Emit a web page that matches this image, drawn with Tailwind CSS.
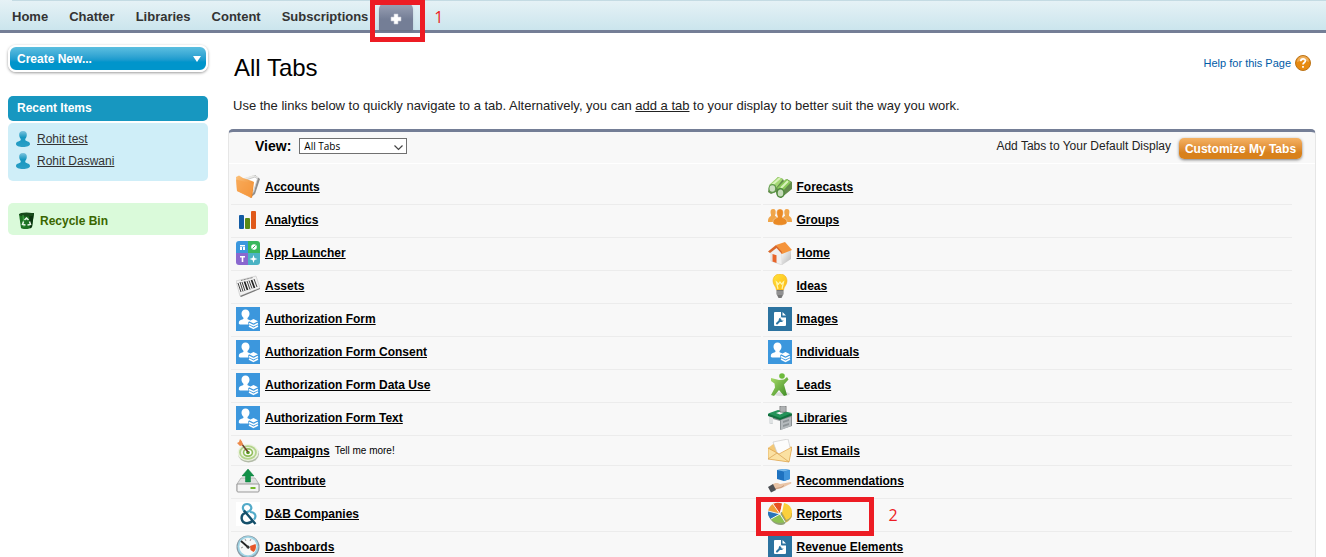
<!DOCTYPE html>
<html lang="en">
<head>
<meta charset="utf-8">
<meta name="viewport" content="width=device-width, initial-scale=1">
<title>All Tabs</title>
<script src="https://cdn.jsdelivr.net/npm/@tailwindcss/browser@4"></script>
</head>
<body class="h-screen overflow-hidden bg-white font-['Liberation_Sans',Arial,sans-serif] text-xs text-[#222]">

<svg class="absolute size-0" aria-hidden="true">
  <defs>
    <linearGradient id="gOrange" x1="0" y1="0" x2="1" y2="1"><stop offset="0" stop-color="#fcc27c"/><stop offset="1" stop-color="#ec7f1c"/></linearGradient>
    <linearGradient id="gGreen" x1="0" y1="0" x2="1" y2="1"><stop offset="0" stop-color="#a9dc6a"/><stop offset="1" stop-color="#3c8a24"/></linearGradient>
    <linearGradient id="gBulb" x1="0" y1="0" x2="1" y2="1"><stop offset="0" stop-color="#ffe23a"/><stop offset="1" stop-color="#fdb913"/></linearGradient>
    <linearGradient id="gGrey" x1="0" y1="0" x2="1" y2="1"><stop offset="0" stop-color="#fafafa"/><stop offset="1" stop-color="#b4b4b4"/></linearGradient>
    <linearGradient id="gPerson" x1="0" y1="0" x2="0" y2="1"><stop offset="0" stop-color="#7cc3dd"/><stop offset=".4" stop-color="#1797c0"/><stop offset="1" stop-color="#2a9fc6"/></linearGradient>
    <clipPath id="launcherClip"><rect width="24" height="24" rx="3"/></clipPath>
  </defs>
  <symbol id="folder" viewBox="0 0 24 24">
    <path d="M10 3l9-3 5 4-5 15-5 4z" fill="#8f8f8f"/><path d="M8 3l10-3 4 2-4 15-6 3z" fill="#e9e9e6"/><path d="M10 5l9-3 2.500 2-5 15" fill="#fff" stroke="#bbb" stroke-width=".7"/>
    <path d="M0 2l3-1.500L7 3l9 3 2 1-2 16L1 16z" fill="url(#gOrange)"/><path d="M0 4.500L14 8l3 1-2 14L1 16z" fill="#f7a04a" opacity=".65"/>
  </symbol>
  <symbol id="bars" viewBox="0 0 24 24">
    <rect x="3" y="7" width="5" height="14" rx="1" fill="#135ba4"/><rect x="9" y="10" width="5" height="11" rx="1" fill="#5b8a14"/><rect x="15" y="3" width="5" height="18" rx="1" fill="#e0591a"/>
  </symbol>
  <symbol id="launcher" viewBox="0 0 24 24">
    <g clip-path="url(#launcherClip)"><path d="M0 0h12v12H0z" fill="#3b97de"/><path d="M12 0h12v12H12z" fill="#3ab75c"/><path d="M0 12h12v12H0z" fill="#8a68cf"/><path d="M12 12h12v12H12z" fill="#4bb3c4"/></g>
    <path d="M4 4h5v1.500H4zM4 6h2v3H4zM7 6h2v3H7zM4 15h5v1.500H7.300V21H5.700v-4.500H4z" fill="#fff"/><circle cx="18" cy="6" r="2.800" fill="#fff"/><path d="M16.500 7.500l3-3" stroke="#3ab75c"/><path d="M17.500 14l1 3 3 1-3 1-1 3-1-3-3-1 3-1z" fill="#fff"/>
  </symbol>
  <symbol id="barcode" viewBox="0 0 24 24">
    <path d="M0 7L20 2l4 12L4 22z" fill="#f2f2f2" stroke="#c5c5c5" stroke-width=".6"/><path d="M4 22l20-8v1L5 23z" fill="#777"/>
    <path d="M2 9l3 9M4 8l3 9.500M6 8l3 9M11 7l3 8.500M13 6.500l3 8M18 5l3 8" stroke="#444" stroke-width="1"/><path d="M8.500 7.500l3 8.500M15.500 6l3 8" stroke="#222" stroke-width="1.700"/><path d="M5 6.500l12-3" stroke="#555" stroke-width=".8" stroke-dasharray="1 .5"/>
  </symbol>
  <symbol id="person-layers" viewBox="0 0 24 24">
    <path fill="#3c97dd" d="M0 0h24v24H0z"/><path d="M9.500 2.500c2.500 0 4 1.700 4 4.200 0 1.600-.8 3-1.800 4-.4.500-.3 1.500.4 1.800l2.400 1-2.200 1.500v2.500H4c-.7 0-1.200-.5-1.200-1.200 0-2 .8-2.700 2-3.200l2.100-.9c.7-.3.800-1.100.3-1.700-1-1.100-1.700-2.300-1.700-3.800 0-2.500 1.500-4.200 4-4.200z" fill="#fff"/>
    <path d="M17.500 12l4.500 2.300-4.500 2.300-4.500-2.300z" fill="#fff"/><path d="M13 16.500l4.500 2.200 4.500-2.200M13 19l4.500 2.300L22 19" fill="none" stroke="#fff" stroke-width="1.500"/>
  </symbol>
  <symbol id="target" viewBox="0 0 24 24">
    <ellipse cx="12.500" cy="15" rx="10.500" ry="8.500" fill="#b3bba8"/><ellipse cx="12" cy="13.500" rx="10.500" ry="8.500" fill="#edf3e2"/><ellipse cx="12" cy="13.500" rx="8" ry="6.400" fill="none" stroke="#b4d48c" stroke-width="1.800"/><ellipse cx="12" cy="13.500" rx="4.400" ry="3.600" fill="#fff" stroke="#8fbc58" stroke-width="1.600"/><circle cx="12" cy="13.500" r="1.800" fill="#5b9a21"/>
    <path d="M5 4l7 9" stroke="#6b3d2b" stroke-width="1.500"/><path d="M4 0l2 2.500L7 6 4 7 1 4l2-1z" fill="#ed8a4a"/>
  </symbol>
  <symbol id="upload" viewBox="0 0 24 24">
    <path d="M5 9h14l4 6v7H1v-7z" fill="#e1e1e1" stroke="#aaa" stroke-width=".8"/><path d="M1 15h22v7a1 1 0 01-1 1H2a1 1 0 01-1-1z" fill="#f4f4f4" stroke="#999" stroke-width="1"/><path d="M14.500 18h5v2h-5z" fill="#73b72b"/>
    <path d="M12 0l6 7h-3.500v6h-5V7H6z" fill="#129148" stroke="#087a39" stroke-width=".5"/>
  </symbol>
  <symbol id="ampersand" viewBox="0 0 24 24">
    <path fill="#fff" d="M0 0h24v24H0z"/><path d="M8.500 9.500C5.500 6 7 2 11 2s6 4.500 2.500 7L9 11" fill="none" stroke="#53abc9" stroke-width="2.200"/><path d="M14 10c5 0 7 4 4 7.500" fill="none" stroke="#53abc9" stroke-width="2.200"/><path d="M8 8.500L19.500 22M9 11c-5 2-4.500 10 2 10.200 2.500 0 4.500-1 6-3.200" fill="none" stroke="#15506b" stroke-width="2.400"/>
  </symbol>
  <symbol id="gauge" viewBox="0 0 24 24">
    <circle cx="12" cy="12" r="11.500" fill="#8799a3"/><circle cx="12" cy="11.500" r="10.500" fill="#9fd3e4"/><circle cx="12" cy="11.500" r="8.700" fill="#f7f8f7"/><path d="M14 11l5.500-2c1 3 .4 6-2 8l-3-2z" fill="#e6572a"/><path d="M5 6l8 7" stroke="#222" stroke-width="1.800"/><circle cx="12" cy="12" r="1.500" fill="#333"/><path d="M5 13l2-1M9 4l1 2M15 4l-1 2" stroke="#999"/>
  </symbol>
  <symbol id="binoculars" viewBox="0 0 24 24">
    <path d="M1 12L10 2l5 2 1 2 3-2 5 3v7l-11 9-4-3-1-3-5 2-3-2z" fill="#638b4b"/><path d="M1 10l9-8 5 2-7 9z" fill="#a4d874"/><path d="M9 13l9-9 5 3-9 10z" fill="#8bc95a"/><path d="M4 10l8-7M13 13l7-7" stroke="#d9f2bb" stroke-width="2"/><ellipse cx="4.500" cy="13.500" rx="4" ry="4.500" fill="#5e9a4a"/><ellipse cx="4.300" cy="13.500" rx="2.800" ry="3.200" fill="#cde0c2"/><ellipse cx="12.500" cy="18" rx="4.200" ry="5" fill="#4d883a"/><ellipse cx="12.500" cy="18" rx="2.800" ry="3.600" fill="#c5dbb9"/>
  </symbol>
  <symbol id="people" viewBox="0 0 24 24">
    <path fill="#f0a549" d="M5 1c2.500 0 3 2 2.600 4.500-.2 1-.6 1.500-.6 2.300L10 10v4H0c0-3 .3-4.500 3-6V6.500C2.200 4 2.300 1 5 1zM19 1c-2.500 0-3 2-2.600 4.500.2 1 .6 1.500.6 2.300L14 10v4h10c0-3-.3-4.500-3-6V6.500C21.800 4 21.700 1 19 1z"/>
    <path d="M12 1c3 0 3.600 2.600 3.200 5-.2 1.300-.9 2-.9 3.300 2.500 1.200 4.700 1.700 4.700 5 0 2-2.500 3-7 3s-7-1-7-3c0-3.300 2.200-3.800 4.700-5 0-1.300-.7-2-.9-3.300C8.400 3.600 9 1 12 1z" fill="#ea8a25" stroke="#f8f8f8" stroke-width=".4"/>
  </symbol>
  <symbol id="house" viewBox="0 0 24 24">
    <path d="M3 11l6-5 5 6v12L3 20z" fill="#f0f0f0" stroke="#ccc" stroke-width=".5"/><path d="M14 12l9-3v9l-9 6z" fill="url(#gGrey)"/><path d="M8 4l9-3 7 8-10 4z" fill="#f5943b"/><path d="M8 4L0 10.500 2 12l6.500-5 5.500 6V11z" fill="#d9692c"/><path d="M4.500 13l4 1.200V22l-4-1.500z" fill="#e7652a"/>
  </symbol>
  <symbol id="bulb" viewBox="0 0 24 24">
    <path d="M12 0c4.500 0 7 3.200 7 7 0 4-3 5-3.500 9h-7C8 12 5 11 5 7c0-3.800 2.500-7 7-7z" fill="url(#gBulb)" stroke="#f2b01e" stroke-width=".6"/><path d="M10 15L8.500 8l2 2L12 8l1.500 2 2-2L14 15" fill="none" stroke="#fff5a8" stroke-width="1.200"/><path d="M8.500 16h7v4l-2 4h-3l-2-4z" fill="#777"/><path d="M8.500 18h7M8.500 20h7" stroke="#bbb" stroke-width=".8"/>
  </symbol>
  <symbol id="file-wrench" viewBox="0 0 24 24">
    <path fill="#2c73a0" d="M0 0h24v24H0z"/><path d="M7 5h6v4.500a1 1 0 001 1h4V18a1 1 0 01-1 1H7a1 1 0 01-1-1V6a1 1 0 011-1zm7.500 0L18 8.500h-3.500z" fill="#fff"/><path d="M9 16.500l3.500-3.500" stroke="#2c73a0" stroke-width="2" stroke-linecap="round"/><path d="M12.500 10.500c-2 .5-2.300 3-1 4s3.500.7 4-1.200l-1.500.4-1.500-1.200z" fill="#2c73a0"/>
  </symbol>
  <symbol id="runner" viewBox="0 0 24 24">
    <ellipse cx="14" cy="21" rx="8" ry="2" fill="#ddd"/><circle cx="14" cy="3" r="2.800" fill="#6dba3c"/><path d="M3 5l8 2 5-.5 3-2.500 1.500 2.500-4.500 5 3 10.500-3 1-5-6-5 6-3-1 4-7.500-.5-4L3 8z" fill="url(#gGreen)"/>
  </symbol>
  <symbol id="desk" viewBox="0 0 24 24">
    <path d="M1 9v8l4 1v-5l7 2v9l12-4V9z" fill="#8b9194"/><path d="M13 14l10-3v9l-10 4z" fill="#b5babd"/><path d="M15 15l6-2v2l-6 2zM15 19l6-2v2l-6 2z" fill="#8e9497"/><path d="M1 10l4 1v7l-4-1z" fill="#dfe2e3"/>
    <path d="M0 8l10-3 14 2.500v2L12 14 0 10z" fill="#12703f"/><path d="M0 7.500L10 4l14 3-12 5z" fill="#24935a"/><path d="M8 7l4-1.200 4 1-4 1.700z" fill="#f5f5f5"/><path d="M12 0h6v6h-6z" fill="#c9cdd0" stroke="#666" stroke-width=".8"/><path d="M13 2h4M13 4h4" stroke="#888" stroke-width=".8"/>
  </symbol>
  <symbol id="mail" viewBox="0 0 24 24">
    <path d="M0 9l8-6 16 5-3 15-21-3z" fill="#f3c877"/><path d="M5 3l15-3 3 12-13 4z" fill="#fcfcfc" stroke="#ccc" stroke-width=".7"/><path d="M0 9l11 6 13-7-3 15-21-3z" fill="#fbe1a2" stroke="#dca14a" stroke-width=".7"/><path d="M0 20l9-6 12 9" fill="none" stroke="#d9a558" stroke-width=".8"/>
  </symbol>
  <symbol id="hand-box" viewBox="0 0 24 24">
    <path d="M9 1l7-1 6 1v9l-6 2-7-2z" fill="#1e72c0"/><path d="M9 1l7-1 6 1-6 1.500z" fill="#77b9ec"/><path d="M16 2.500L22 1v9l-6 2z" fill="#3f94db"/><path d="M4 16c3-3 6-2 8-1l11-2c1 1 0 2-2 2.500L14 19l-8 2z" fill="#e9c4a6"/><path d="M5 20l8-1.500 3-2" fill="none" stroke="#b98b6c" stroke-width=".7"/><path d="M0 18l5-3 3 6-5 2.500z" fill="#4c5055"/>
  </symbol>
  <symbol id="pie" viewBox="0 0 24 24">
    <path d="M0 9c0 8 6 14 13 14 3 0 4-1 5-3 4-2 6-5 6-9z" fill="#91a178"/>
    <path d="M12 12L0 9c1-4 3-6 6-7.500z" fill="#f0a035"/><path d="M12 12L5 2c3-1.500 6-1.500 9-.5z" fill="#e65324"/><path d="M12 12L0 9c-.5 3 .5 6 3 8z" fill="#2874b8"/><path d="M12 12l-9 5c3 4 9 5 14 3z" fill="#8cc152"/><path d="M14 11l2-10c5 1 8 5 8 9 0 4-2 7-6 8z" fill="#fbd03c"/><path d="M14 11l4 7v2c4-1.500 6-5 6-9" fill="none" stroke="#d5a62c" stroke-width=".8"/>
    <path d="M12 12l3-11M12 12L5 2M0 9l12 3-9 5M12 12l5 8" stroke="#fff" stroke-width=".9" fill="none"/>
  </symbol>
  <symbol id="person" viewBox="0 0 14 16">
    <path d="M7 0c3 0 4 1.700 3.800 4.200C10.600 6.500 9.500 7 9.200 8.500c0 2 4.800 1.500 4.800 4.500 0 2-3 3-7 3s-7-1-7-3c0-3 4.800-2.500 4.800-4.500C4.500 7 3.400 6.500 3.200 4.200 3 1.700 4 0 7 0z" fill="url(#gPerson)"/>
  </symbol>
</svg>

<nav class="relative border-b-[3px] border-[#747e96] bg-linear-to-b from-[#e6f2f6] to-[#cbe5ed] pl-3" aria-label="Tabs">
  <ul class="flex h-[30px] items-center gap-[21px] border-t border-[#c4dbe3] pt-0.5 text-[13px] font-bold text-[#333]">
    <li><a href="#">Home</a></li>
    <li><a href="#">Chatter</a></li>
    <li><a href="#">Libraries</a></li>
    <li><a href="#">Content</a></li>
    <li><a href="#">Subscriptions</a></li>
    <li class="relative -ml-2.5 self-end">
      <a href="#" aria-label="All Tabs" class="flex h-[27px] w-[34px] items-center justify-center rounded-t-md bg-linear-to-b from-[#9da3b6] to-[#747e96] to-60% pt-1 shadow">
        <svg class="size-3" viewBox="0 0 12 12"><path d="M4 1h4v3h3v4H8v3H4V8H1V4h3z" fill="#fff" stroke="#c3c8d4" stroke-width=".6"/></svg>
      </a>
      <span class="pointer-events-none absolute -top-[3px] -left-[9px] h-[42px] w-[55px] border-[5px] border-[#ed1c24]"></span>
      <span class="absolute top-1 left-[55px] font-['Open_Sans',sans-serif] text-base leading-5 font-normal text-[#ed1c24]">1</span>
    </li>
  </ul>
</nav>

<div class="flex gap-5 px-2">
  <aside class="w-[200px] shrink-0 pt-3">
    <button type="button" class="flex h-[27px] w-full items-center justify-between rounded-lg border-2 border-white bg-linear-to-b from-[#5bbfe0] to-[#0095cb] to-65% pr-[5px] pl-[7px] font-bold text-white shadow-[0_1px_3px_rgba(0,0,0,0.4)]">
      Create New...
      <svg class="h-[6px] w-2" viewBox="0 0 8 6"><path d="M0 0h8L4 6z" fill="#fff"/></svg>
    </button>
    <h2 class="mt-6 rounded-[5px] bg-[#1797c0] px-[9px] py-1 text-xs leading-[17px] font-bold text-white">Recent Items</h2>
    <ul class="mt-0.5 h-[58px] rounded-[5px] bg-[#cfeef8] px-2 pt-[5px] leading-[22px] text-[#333]">
      <li class="flex items-center gap-[7px]"><svg class="h-4 w-3.5"><use href="#person"/></svg><a class="underline" href="#">Rohit test</a></li>
      <li class="flex items-center gap-[7px]"><svg class="h-4 w-3.5"><use href="#person"/></svg><a class="underline" href="#">Rohit Daswani</a></li>
    </ul>
    <a href="#" class="mt-[22px] flex h-8 items-center gap-1 rounded-[5px] bg-[#dafada] pt-1 pl-2.5 font-bold text-[#3a6600]">
      <svg class="size-[18px]" viewBox="0 0 18 18"><path d="M1 2l15-1-2 14c-1 2-9 3-11 1z" fill="#1d7223"/><path d="M11 2l5-1-2 14-2 1.500z" fill="#0b3310"/><ellipse cx="8.500" cy="2.500" rx="7.500" ry="2" fill="#174a1b"/><path d="M5 3l1 12" stroke="#42a848"/><path d="M6.500 8l2-2 2 2M11.500 9.500l1 3-3 .5M5.500 9.500l-1 3 3 .5" fill="none" stroke="#e9f7e9" stroke-width="1.500"/></svg>
      Recycle Bin
    </a>
  </aside>

  <main class="min-w-0 flex-1 pr-0.5">
    <header class="flex items-start justify-between pt-5 pl-1.5">
      <h1 class="text-2xl leading-[30px] text-black">All Tabs</h1>
      <a href="#" class="flex items-center gap-1 pr-[5px] text-[11px] leading-5 text-[#015ba7]">Help for this Page
        <svg class="size-4" viewBox="0 0 16 16"><circle cx="8" cy="8" r="7.500" fill="#e78a10" stroke="#bc7419"/><path d="M2 7a6 6 0 0112 0q-6-3-12 0z" fill="#fff" opacity=".3"/><path d="M5.800 6.200c0-3 4.600-3 4.600-.4C10.400 7.500 8 7.500 8 9.500M8 11v1.700" fill="none" stroke="#fff" stroke-width="1.700"/></svg>
      </a>
    </header>
    <p class="pt-[13px] pl-[5px] text-[13px] leading-5">Use the links below to quickly navigate to a tab. Alternatively, you can <a href="#" class="underline">add a tab</a> to your display to better suit the way you work.</p>

    <section class="mt-[13px] rounded-t-[5px] border-x border-t-[3px] border-x-[#e6e6e6] border-t-[#747e96] bg-[#f8f8f8]">
      <div class="flex h-8 items-center border-b border-white pr-[13px] pb-1 pl-[26px]">
        <label for="view" class="text-sm font-bold text-black">View:</label>
        <div class="relative ml-2">
          <select id="view" class="block h-4 w-[108px] appearance-none border border-[#707070] bg-white pl-1 font-['Open_Sans',sans-serif] text-[10px] leading-3 text-black"><option>All Tabs</option></select>
          <svg class="pointer-events-none absolute top-[7px] right-1 h-[6px] w-[9px]" viewBox="0 0 9 6"><path d="M.5.500l4 4 4-4" fill="none" stroke="#444" stroke-width="1.200"/></svg>
        </div>
        <span class="ml-auto">Add Tabs to Your Default Display</span>
        <button type="button" class="ml-2 h-[21px] w-[123px] self-end rounded-[5px] bg-linear-to-b from-[#f5b263] to-[#d8811b] to-70% text-xs leading-4 font-bold whitespace-nowrap text-white shadow-[0_1px_3px_rgba(0,0,0,0.5)]">Customize My Tabs</button>
      </div>

      <div class="grid grid-cols-2 gap-0.5 pt-2 pr-[23px] pl-0.5 font-bold text-black [&_a]:underline [&_li]:flex [&_li]:h-[33px] [&_li]:items-center [&_li]:gap-[5px] [&_li]:border-b [&_li]:border-[#ececec] [&_li]:pt-[3px] [&_li]:pb-[5px] [&_li]:pl-[5px] [&_svg]:size-6">
        <ul>
          <li><svg><use href="#folder"/></svg><a href="#">Accounts</a></li>
          <li><svg><use href="#bars"/></svg><a href="#">Analytics</a></li>
          <li><svg><use href="#launcher"/></svg><a href="#">App Launcher</a></li>
          <li><svg><use href="#barcode"/></svg><a href="#">Assets</a></li>
          <li><svg><use href="#person-layers"/></svg><a href="#">Authorization Form</a></li>
          <li><svg><use href="#person-layers"/></svg><a href="#">Authorization Form Consent</a></li>
          <li><svg><use href="#person-layers"/></svg><a href="#">Authorization Form Data Use</a></li>
          <li><svg><use href="#person-layers"/></svg><a href="#">Authorization Form Text</a></li>
          <li class="h-[30px]! pb-0.5!"><svg><use href="#target"/></svg><a href="#">Campaigns</a><span class="text-[10px] font-normal">Tell me more!</span></li>
          <li><svg><use href="#upload"/></svg><a href="#">Contribute</a></li>
          <li><svg><use href="#ampersand"/></svg><a href="#">D&amp;B Companies</a></li>
          <li><svg><use href="#gauge"/></svg><a href="#">Dashboards</a></li>
        </ul>
        <ul>
          <li><svg><use href="#binoculars"/></svg><a href="#">Forecasts</a></li>
          <li><svg><use href="#people"/></svg><a href="#">Groups</a></li>
          <li><svg><use href="#house"/></svg><a href="#">Home</a></li>
          <li><svg><use href="#bulb"/></svg><a href="#">Ideas</a></li>
          <li><svg><use href="#file-wrench"/></svg><a href="#">Images</a></li>
          <li><svg><use href="#person-layers"/></svg><a href="#">Individuals</a></li>
          <li><svg><use href="#runner"/></svg><a href="#">Leads</a></li>
          <li><svg><use href="#desk"/></svg><a href="#">Libraries</a></li>
          <li class="h-[30px]! pb-0.5!"><svg><use href="#mail"/></svg><a href="#">List Emails</a></li>
          <li><svg><use href="#hand-box"/></svg><a href="#">Recommendations</a></li>
          <li class="relative"><svg><use href="#pie"/></svg><a href="#">Reports</a>
            <span class="pointer-events-none absolute -top-0.5 -left-[7px] h-[39px] w-[118px] border-[5px] border-[#ed1c24]"></span>
            <span class="absolute top-1.5 left-[126px] font-['Open_Sans',sans-serif] text-base leading-5 font-normal text-[#ed1c24]">2</span></li>
          <li><svg><use href="#file-wrench"/></svg><a href="#">Revenue Elements</a></li>
        </ul>
      </div>
    </section>
  </main>
</div>
</body>
</html>
